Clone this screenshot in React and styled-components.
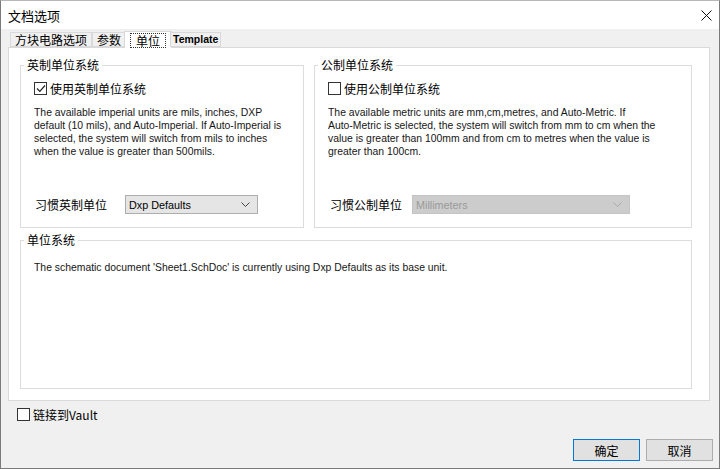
import React from "react";
import styled, { createGlobalStyle } from "styled-components";

const cjk = `"Noto Sans CJK SC", "Liberation Sans", sans-serif`;
const latin = `"Liberation Sans", "Noto Sans CJK SC", sans-serif`;

const GlobalStyle = createGlobalStyle`
  html, body {
    margin: 0;
    padding: 0;
    background: #f0f0f0;
  }
  body {
    font-family: ${cjk};
    color: #000;
  }
`;

const Window = styled.div`
  width: 720px;
  height: 469px;
  box-sizing: border-box;
  display: flex;
  flex-direction: column;
  border: 1px solid #7a7a7a;
  border-top-color: #b8b8b8;
  background: #f0f0f0;
  overflow: hidden;
`;

const TitleBar = styled.div`
  height: 28px;
  flex: none;
  background: #fff;
  display: flex;
  align-items: center;
  justify-content: space-between;
  padding: 0 7px 0 7px;
  font: 13px ${cjk};
`;

const CloseButton = styled.span`
  display: flex;
  width: 11px;
  height: 11px;
`;

const TabArea = styled.div`
  padding: 2px 9px 0 7px;
  display: flex;
  flex-direction: column;
`;

const TabStrip = styled.div`
  display: flex;
  align-items: flex-end;
  height: 16px;
  padding-left: 2px;
  position: relative;
  z-index: 1;
`;

const Tab = styled.div`
  box-sizing: border-box;
  height: ${(p) => (p.$selected ? "17px" : "15px")};
  margin: ${(p) => (p.$selected ? "0 -2px -1px" : "0")};
  padding: 0 ${(p) => p.$pad}px;
  border: 1px solid #d9d9d9;
  border-bottom: ${(p) => (p.$selected ? "none" : "1px solid #d9d9d9")};
  background: ${(p) => (p.$selected ? "#fff" : "#f0f0f0")};
  display: flex;
  align-items: center;
  font: ${(p) => (p.$latin ? `bold 10.5px ${latin}` : `12px ${cjk}`)};
  line-height: 13px;
  white-space: nowrap;
`;

const FocusRect = styled.span`
  outline: 1px dotted #333;
  outline-offset: 0;
  padding: 0 5px;
  line-height: 13px;
`;

const Page = styled.div`
  height: 354px;
  box-sizing: border-box;
  background: #fff;
  border: 1px solid #d9d9d9;
  padding: 9px 17px 11px 11px;
  display: flex;
  flex-direction: column;
  gap: 4px;
`;

const TopRow = styled.div`
  display: grid;
  grid-template-columns: 284px 378px;
  gap: 10px;
`;

const Group = styled.fieldset`
  margin: 0;
  min-width: 0;
  box-sizing: border-box;
  padding: 0 13px 13px 13px;
  border: 1px solid #dcdcdc;
  flex: ${(p) => (p.$grow ? 1 : "none")};
`;

const Legend = styled.legend`
  margin-left: -10px;
  padding: 0 3px;
  font: 12px ${cjk};
  line-height: 16px;
`;

const CheckRow = styled.label`
  display: flex;
  align-items: center;
  gap: 3px;
  height: 16px;
  margin-top: ${(p) => p.$top}px;
  font: 12px ${cjk};
`;

const Box = styled.span`
  width: 13px;
  height: 13px;
  box-sizing: border-box;
  border: 1px solid #333;
  background: #fff;
  display: flex;
  align-items: center;
  justify-content: center;
  flex: none;
`;

const Text = styled.p`
  margin: ${(p) => p.$top}px 0 0 0;
  height: ${(p) => (p.$lines ? `${p.$lines * 13}px` : "auto")};
  font: 10.4px ${latin};
  line-height: 13px;
  color: #161616;
  white-space: nowrap;
`;

const ComboRow = styled.div`
  display: flex;
  align-items: center;
  margin-top: 37px;
  padding-left: ${(p) => p.$indent}px;
`;

const ComboLabel = styled.span`
  width: ${(p) => p.$width}px;
  font: 12px ${cjk};
  flex: none;
`;

const Combo = styled.div`
  width: ${(p) => p.$width}px;
  height: 19px;
  box-sizing: border-box;
  border: 1px solid ${(p) => (p.$disabled ? "#c4c4c4" : "#adadad")};
  background: ${(p) => (p.$disabled ? "#cccccc" : "#e5e5e5")};
  color: ${(p) => (p.$disabled ? "#9a9a9a" : "#000")};
  display: flex;
  align-items: center;
  justify-content: space-between;
  padding: 0 7px 0 3px;
  font: 10.8px ${latin};
`;

const Footer = styled.div`
  flex: 1;
  display: flex;
  flex-direction: column;
  padding: 5px 6px 0 16px;
`;

const ButtonRow = styled.div`
  display: flex;
  justify-content: flex-end;
  gap: 6px;
  margin-top: 17px;
`;

const Button = styled.button`
  width: 67px;
  height: 22px;
  box-sizing: border-box;
  padding: 0;
  border: 1px solid ${(p) => (p.$primary ? "#0078d7" : "#adadad")};
  background: #e1e1e1;
  font: 12px ${cjk};
  color: #000;
`;

const Check = ({ checked }) => (
  <Box>
    {checked && (
      <svg width="10" height="9" viewBox="0 0 10 9">
        <polyline points="1,4.5 3.8,7.3 9,1.5" fill="none" stroke="#222" strokeWidth="1.2" />
      </svg>
    )}
  </Box>
);

const Chevron = ({ color }) => (
  <svg width="9" height="5" viewBox="0 0 9 5">
    <polyline points="0.5,0.5 4.5,4.5 8.5,0.5" fill="none" stroke={color} strokeWidth="1" />
  </svg>
);

export default function App() {
  return (
    <>
      <GlobalStyle />
      <Window>
        <TitleBar>
          <span>文档选项</span>
          <CloseButton>
            <svg width="11" height="11" viewBox="0 0 11 11">
              <path d="M0.5 0.5 L10.5 10.5 M10.5 0.5 L0.5 10.5" stroke="#111" strokeWidth="1" />
            </svg>
          </CloseButton>
        </TitleBar>

        <TabArea>
          <TabStrip>
            <Tab $pad={4}>方块电路选项</Tab>
            <Tab $pad={4}>参数</Tab>
            <Tab $pad={6} $selected>
              <FocusRect>单位</FocusRect>
            </Tab>
            <Tab $pad={2} $latin>
              Template
            </Tab>
          </TabStrip>

          <Page>
            <TopRow>
              <Group>
                <Legend>英制单位系统</Legend>
                <CheckRow $top={7}>
                  <Check checked />
                  使用英制单位系统
                </CheckRow>
                <Text $top={10} $lines={4}>
                  The available imperial units are mils, inches, DXP
                  <br />
                  default (10 mils), and Auto-Imperial. If Auto-Imperial is
                  <br />
                  selected, the system will switch from mils to inches
                  <br />
                  when the value is greater than 500mils.
                </Text>
                <ComboRow $indent={1}>
                  <ComboLabel $width={90}>习惯英制单位</ComboLabel>
                  <Combo $width={133}>
                    Dxp Defaults
                    <Chevron color="#444" />
                  </Combo>
                </ComboRow>
              </Group>

              <Group>
                <Legend>公制单位系统</Legend>
                <CheckRow $top={7}>
                  <Check />
                  使用公制单位系统
                </CheckRow>
                <Text $top={10} $lines={4}>
                  The available metric units are mm,cm,metres, and Auto-Metric. If
                  <br />
                  Auto-Metric is selected, the system will switch from mm to cm when the
                  <br />
                  value is greater than 100mm and from cm to metres when the value is
                  <br />
                  greater than 100cm.
                </Text>
                <ComboRow $indent={2}>
                  <ComboLabel $width={82}>习惯公制单位</ComboLabel>
                  <Combo $width={218} $disabled>
                    Millimeters
                    <Chevron color="#a8a8a8" />
                  </Combo>
                </ComboRow>
              </Group>
            </TopRow>

            <Group $grow>
              <Legend>单位系统</Legend>
              <Text $top={13}>
                The schematic document 'Sheet1.SchDoc' is currently using Dxp Defaults as its base
                unit.
              </Text>
            </Group>
          </Page>
        </TabArea>

        <Footer>
          <CheckRow $top={0}>
            <Check />
            链接到Vault
          </CheckRow>
          <ButtonRow>
            <Button $primary>确定</Button>
            <Button>取消</Button>
          </ButtonRow>
        </Footer>
      </Window>
    </>
  );
}
